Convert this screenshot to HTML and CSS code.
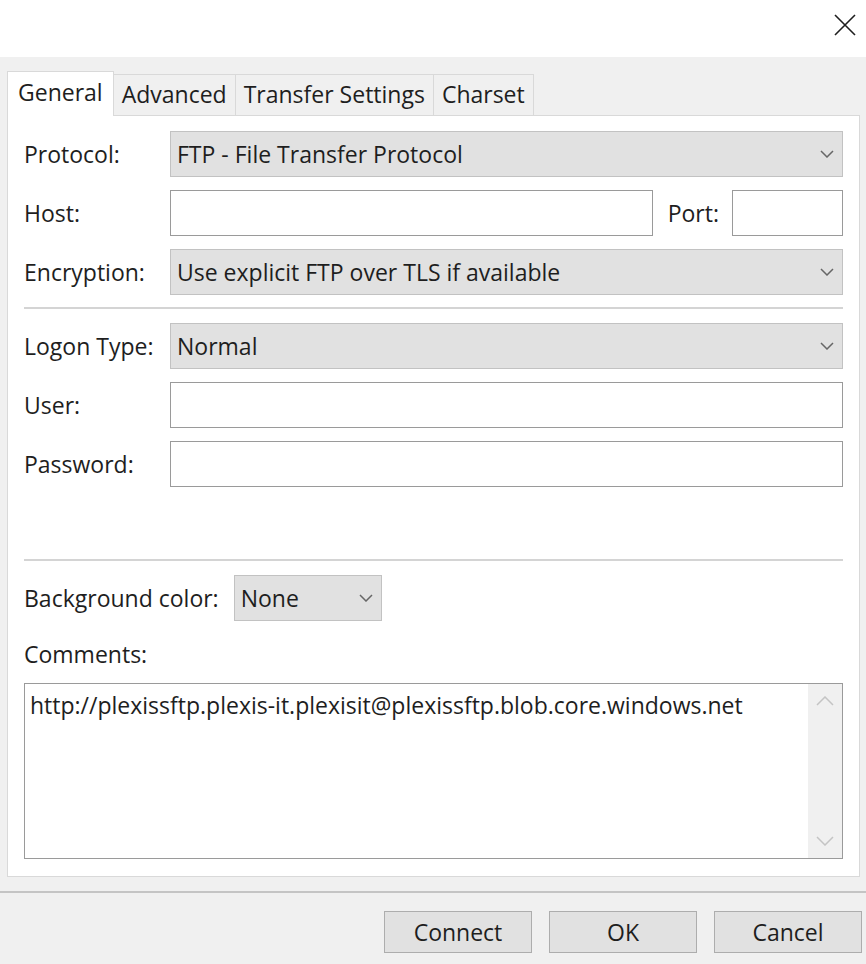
FILE: index.html
```html
<!DOCTYPE html>
<html lang="en">

<head>
    <meta charset="UTF-8">
    <title>Site Manager - General</title>
    <link rel="stylesheet" href="styles.css">
</head>

<body>
    <div class="titlebar">
        <button class="close-btn" type="button" aria-label="Close">
            <svg width="22" height="22" viewBox="0 0 22 22">
                <path d="M1 1 L21 21 M21 1 L1 21" stroke="#1e1e1e" stroke-width="1.6" fill="none"/>
            </svg>
        </button>
    </div>

    <div class="window">
        <div class="tabs">
            <div class="tab active">General</div>
            <div class="tab">Advanced</div>
            <div class="tab">Transfer Settings</div>
            <div class="tab">Charset</div>
        </div>

        <div class="panel">
            <div class="row">
                <label class="lbl">Protocol:</label>
                <div class="combo grow">
                    <span>FTP - File Transfer Protocol</span>
                    <svg class="chev" width="14" height="8" viewBox="0 0 14 8"><path d="M1 1 L7 7 L13 1" stroke="#666" stroke-width="1.5" fill="none"/></svg>
                </div>
            </div>
            <div class="row">
                <label class="lbl">Host:</label>
                <div class="input grow"></div>
                <label class="port-lbl">Port:</label>
                <div class="input port"></div>
            </div>
            <div class="row">
                <label class="lbl">Encryption:</label>
                <div class="combo grow">
                    <span>Use explicit FTP over TLS if available</span>
                    <svg class="chev" width="14" height="8" viewBox="0 0 14 8"><path d="M1 1 L7 7 L13 1" stroke="#666" stroke-width="1.5" fill="none"/></svg>
                </div>
            </div>

            <div class="sep"></div>

            <div class="row">
                <label class="lbl">Logon Type:</label>
                <div class="combo grow">
                    <span>Normal</span>
                    <svg class="chev" width="14" height="8" viewBox="0 0 14 8"><path d="M1 1 L7 7 L13 1" stroke="#666" stroke-width="1.5" fill="none"/></svg>
                </div>
            </div>
            <div class="row">
                <label class="lbl">User:</label>
                <div class="input grow"></div>
            </div>
            <div class="row">
                <label class="lbl">Password:</label>
                <div class="input grow"></div>
            </div>

            <div class="sep sep-low"></div>

            <div class="row bg-row">
                <label class="bg-lbl">Background color:</label>
                <div class="combo small">
                    <span>None</span>
                    <svg class="chev" width="14" height="8" viewBox="0 0 14 8"><path d="M1 1 L7 7 L13 1" stroke="#666" stroke-width="1.5" fill="none"/></svg>
                </div>
            </div>

            <div class="comments-lbl">Comments:</div>
            <div class="textarea">
                <div class="ta-text">http://plexissftp.plexis-it.plexisit@plexissftp.blob.core.windows.net</div>
                <div class="scrollbar">
                    <svg width="18" height="10" viewBox="0 0 18 10"><path d="M1 9 L9 1 L17 9" stroke="#c4c4c4" stroke-width="1.5" fill="none"/></svg>
                    <svg width="18" height="10" viewBox="0 0 18 10"><path d="M1 1 L9 9 L17 1" stroke="#c4c4c4" stroke-width="1.5" fill="none"/></svg>
                </div>
            </div>
        </div>

        <div class="footer-line"></div>

        <div class="buttons">
            <button class="btn" type="button">Connect</button>
            <button class="btn" type="button">OK</button>
            <button class="btn" type="button">Cancel</button>
        </div>
    </div>
</body>

</html>
```

FILE: styles.css
```css
body {
    margin: 0;
    font-family: "Open Sans", "Noto Sans", sans-serif;
    font-size: 23px;
    color: #1e1e1e;
    background-color: #f0f0f0;
}

.titlebar {
    height: 57px;
    background-color: #fff;
    display: flex;
    justify-content: flex-end;
    align-items: flex-start;
}

.close-btn {
    background: none;
    border: none;
    padding: 0;
    margin: 14px 10px 0 0;
    width: 22px;
    height: 22px;
}

.window {
    background-color: #f0f0f0;
    height: 907px;
}

.tabs {
    display: flex;
    align-items: flex-end;
    padding: 14px 0 0 7px;
    height: 44px;
}

.tab {
    height: 40px;
    line-height: 38px;
    padding: 0 8px;
    border: 1px solid #d9d9d9;
    border-bottom: none;
    margin-left: -1px;
    background-color: #f0f0f0;
}

.tab.active {
    height: 44px;
    line-height: 40px;
    padding: 0 10px 0 10px;
    background-color: #fff;
    margin-left: 0;
    margin-bottom: -1px;
    position: relative;
    z-index: 1;
}

.panel {
    margin: 0 6px 0 7px;
    background-color: #fff;
    border: 1px solid #d9d9d9;
    padding: 15px 16px 17px 16px;
}

.row {
    display: flex;
    align-items: center;
    height: 46px;
    margin-bottom: 13px;
}

.lbl {
    width: 146px;
    flex-shrink: 0;
}

.grow {
    flex: 1;
}

.combo {
    box-sizing: border-box;
    height: 46px;
    background-color: #e1e1e1;
    border: 1px solid #c2c2c2;
    display: flex;
    align-items: center;
    justify-content: space-between;
    padding: 0 8px 0 6px;
}

.input {
    box-sizing: border-box;
    height: 46px;
    background-color: #fff;
    border: 1px solid #9a9a9a;
}

.port-lbl {
    margin: 0 13px 0 15px;
}

.port {
    width: 111px;
}

.sep {
    height: 2px;
    background-color: #d4d4d4;
    margin: -1px 0 14px 0;
}

.sep-low {
    margin-top: 72px;
}

.bg-row {
    margin-bottom: 0;
}

.bg-lbl {
    margin-right: 15px;
}

.combo.small {
    width: 148px;
}

.comments-lbl {
    line-height: 30px;
    margin: 18px 0 14px 0;
}

.textarea {
    box-sizing: border-box;
    height: 176px;
    border: 1px solid #9a9a9a;
    display: flex;
}

.ta-text {
    flex: 1;
    padding: 6px 5px;
    line-height: 30px;
}

.scrollbar {
    width: 34px;
    background-color: #f0f0f0;
    display: flex;
    flex-direction: column;
    justify-content: space-between;
    align-items: center;
    padding: 12px 0 12px 0;
}

.footer-line {
    height: 2px;
    background-color: #c4c4c4;
    margin-top: 14px;
}

.buttons {
    display: flex;
    justify-content: flex-end;
    gap: 17px;
    padding: 18px 4px 0 0;
}

.btn {
    width: 148px;
    height: 42px;
    font-family: inherit;
    font-size: 23px;
    color: #1e1e1e;
    background-color: #e1e1e1;
    border: 1px solid #adadad;
    padding: 0;
}
```
